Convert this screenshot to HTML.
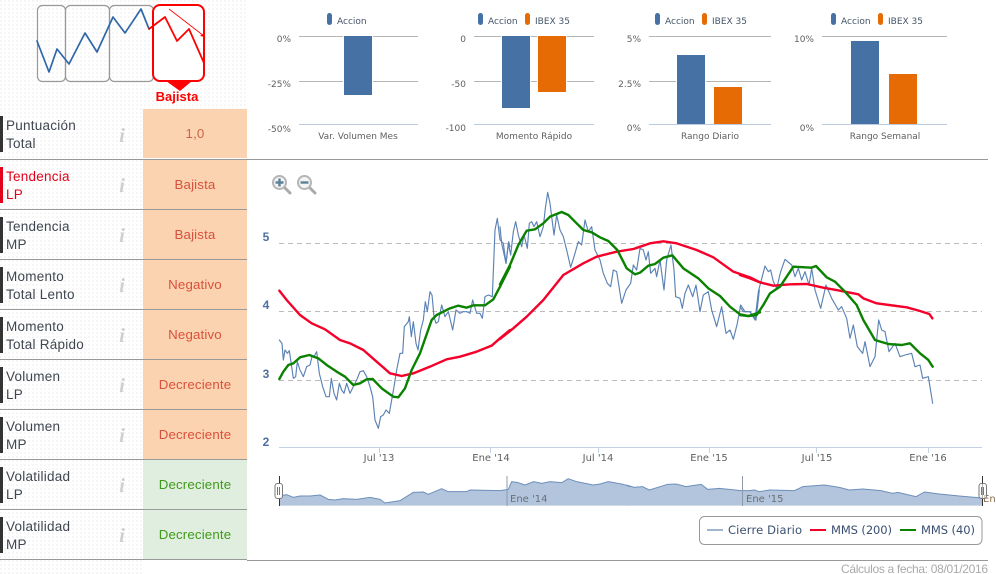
<!DOCTYPE html>
<html lang="es"><head><meta charset="utf-8"><title>Análisis</title>
<style>
html,body{margin:0;padding:0;background:#fff;width:996px;height:574px;overflow:hidden}
svg{display:block;font-family:"Liberation Sans",sans-serif}
.rl{font-size:13.5px;fill:#3f4650;letter-spacing:.25px}
.v{font-size:13.3px;text-anchor:middle;letter-spacing:.15px}
.o{fill:#d8513c}.g{fill:#3f9a1a}
.i{font-family:"Liberation Serif",serif;font-style:italic;font-weight:bold;font-size:20px;fill:#cfcfcf;text-anchor:middle}
.l{font-family:"DejaVu Sans",sans-serif;font-size:9px;fill:#445468}
.y{font-family:"DejaVu Sans",sans-serif;font-size:9px;fill:#5f5f5f;text-anchor:end}
.c{font-family:"DejaVu Sans",sans-serif;font-size:9px;fill:#5f5f5f;text-anchor:middle}
.x{font-family:"DejaVu Sans",sans-serif;font-size:10px;fill:#5f5f5f;text-anchor:middle;font-weight:normal}
.yb{font-size:12px;font-weight:bold;fill:#4d70a0;text-anchor:middle}
.t{fill:none;stroke-linejoin:round;stroke-linecap:round}
</style></head><body>
<svg width="996" height="574" viewBox="0 0 996 574" xmlns="http://www.w3.org/2000/svg">
<defs><pattern id="d" width="4" height="4" patternUnits="userSpaceOnUse"><rect x="0" y="0" width="2" height="2" fill="#f6f6f6"/></pattern></defs>
<rect width="996" height="574" fill="#fff"/>
<rect x="0" y="0" width="143" height="574" fill="url(#d)"/>
<rect x="143" y="0" width="104" height="109" fill="url(#d)"/>

<!-- top icon -->
<g fill="none" stroke="#999" stroke-width="1.2">
<rect x="37.5" y="5.5" width="28" height="76" rx="5"/>
<rect x="65.5" y="5.5" width="44" height="76" rx="5"/>
<rect x="109.5" y="5.5" width="44" height="76" rx="5"/>
</g>
<rect x="153" y="5" width="51" height="76" rx="7" fill="#fff" stroke="#f00" stroke-width="2"/>
<polyline class="t" stroke="#2f67a8" stroke-width="1.7" points="37,41 49,72 57,49 69,64 85,33 97,52 113,17 125,33 141,9 149,29"/>
<polyline class="t" stroke="#f00" stroke-width="1.8" points="149,29 165,17 177,41 189,29 204,63"/>
<path d="M169 9L204 36" stroke="#f00" stroke-width=".8" fill="none"/><path d="M200 36l5 1-1-4z" fill="#f00"/>
<path d="M166 81H192L180 91Z" fill="#f00"/>
<text x="177" y="101" font-size="13" font-weight="bold" fill="#f00" text-anchor="middle">Bajista</text>

<!-- left table -->
<rect x="143" y="109" width="104" height="49" fill="#fcd3b0"/>
<rect x="143" y="160" width="104" height="49" fill="#fcd3b0"/>
<rect x="143" y="210" width="104" height="49" fill="#fcd3b0"/>
<rect x="143" y="260" width="104" height="49" fill="#fcd3b0"/>
<rect x="143" y="310" width="104" height="49" fill="#fcd3b0"/>
<rect x="143" y="360" width="104" height="49" fill="#fcd3b0"/>
<rect x="143" y="410" width="104" height="49" fill="#fcd3b0"/>
<rect x="143" y="460" width="104" height="49" fill="#e0eedf"/>
<rect x="143" y="510" width="104" height="49" fill="#e0eedf"/>
<g fill="#999">
<rect x="0" y="159" width="247" height="1"/><rect x="0" y="209" width="247" height="1"/><rect x="0" y="259" width="247" height="1"/><rect x="0" y="309" width="247" height="1"/><rect x="0" y="359" width="247" height="1"/><rect x="0" y="409" width="247" height="1"/><rect x="0" y="459" width="247" height="1"/><rect x="0" y="509" width="247" height="1"/><rect x="0" y="559" width="247" height="1"/>
</g>
<g fill="#333">
<rect x="0" y="116" width="3" height="36"/><rect x="0" y="217" width="3" height="36"/><rect x="0" y="267" width="3" height="36"/><rect x="0" y="317" width="3" height="36"/><rect x="0" y="367" width="3" height="36"/><rect x="0" y="417" width="3" height="36"/><rect x="0" y="467" width="3" height="36"/><rect x="0" y="517" width="3" height="36"/>
</g>
<rect x="0" y="167" width="3" height="36" fill="#e2001a"/>
<text class="rl" x="6" y="130">Puntuación</text><text class="rl" x="6" y="148">Total</text>
<text class="rl" x="6" y="181" style="fill:#e2001a">Tendencia</text><text class="rl" x="6" y="199" style="fill:#e2001a">LP</text>
<text class="rl" x="6" y="231">Tendencia</text><text class="rl" x="6" y="249">MP</text>
<text class="rl" x="6" y="281">Momento</text><text class="rl" x="6" y="299">Total Lento</text>
<text class="rl" x="6" y="331">Momento</text><text class="rl" x="6" y="349">Total Rápido</text>
<text class="rl" x="6" y="381">Volumen</text><text class="rl" x="6" y="399">LP</text>
<text class="rl" x="6" y="431">Volumen</text><text class="rl" x="6" y="449">MP</text>
<text class="rl" x="6" y="481">Volatilidad</text><text class="rl" x="6" y="499">LP</text>
<text class="rl" x="6" y="531">Volatilidad</text><text class="rl" x="6" y="549">MP</text>
<g class="i">
<text class="i" x="122" y="142">i</text><text class="i" x="122" y="192">i</text><text class="i" x="122" y="242">i</text><text class="i" x="122" y="292">i</text><text class="i" x="122" y="342">i</text><text class="i" x="122" y="392">i</text><text class="i" x="122" y="442">i</text><text class="i" x="122" y="492">i</text><text class="i" x="122" y="542">i</text>
</g>
<text class="v" x="195" y="138" fill="#c9654a">1,0</text>
<text class="v o" x="195" y="189">Bajista</text>
<text class="v o" x="195" y="239">Bajista</text>
<text class="v o" x="195" y="289">Negativo</text>
<text class="v o" x="195" y="339">Negativo</text>
<text class="v o" x="195" y="389">Decreciente</text>
<text class="v o" x="195" y="439">Decreciente</text>
<text class="v g" x="195" y="489">Decreciente</text>
<text class="v g" x="195" y="539">Decreciente</text>

<!-- separators -->
<rect x="247" y="159" width="741" height="1" fill="#999"/>
<rect x="247" y="560" width="741" height="1" fill="#999"/>
<text x="988" y="573" font-size="12" fill="#aaa" text-anchor="end" textLength="147">Cálculos a fecha: 08/01/2016</text>

<!-- bar chart 1 -->
<g fill="#b5b5b5"><rect x="299" y="36" width="119" height="1"/><rect x="299" y="81" width="119" height="1"/></g>
<rect x="299" y="124" width="119" height="1" fill="#b8cbdf"/>
<rect x="343" y="35" width="30" height="61" fill="#fff"/><rect x="344" y="36" width="28" height="59" fill="#4571a5"/>
<rect x="327" y="13" width="5" height="12" rx="2.5" fill="#4571a5"/><text class="l" x="337" y="24">Accion</text>
<text class="y" x="291" y="42">0%</text><text class="y" x="291" y="87">-25%</text><text class="y" x="291" y="132">-50%</text>
<text class="c" x="358" y="139">Var. Volumen Mes</text>

<!-- bar chart 2 -->
<g fill="#b5b5b5"><rect x="474" y="36" width="120" height="1"/><rect x="474" y="81" width="120" height="1"/></g>
<rect x="474" y="124" width="120" height="1" fill="#b8cbdf"/>
<rect x="501" y="35" width="30" height="74" fill="#fff"/><rect x="537" y="35" width="30" height="58" fill="#fff"/>
<rect x="502" y="36" width="28" height="72" fill="#4571a5"/><rect x="538" y="36" width="28" height="56" fill="#e66b05"/>
<rect x="478" y="13" width="5" height="12" rx="2.5" fill="#4571a5"/><text class="l" x="488" y="24">Accion</text>
<rect x="525" y="13" width="5" height="12" rx="2.5" fill="#e66b05"/><text class="l" x="535" y="24">IBEX 35</text>
<text class="y" x="466" y="42">0</text><text class="y" x="466" y="87">-50</text><text class="y" x="466" y="131">-100</text>
<text class="c" x="534" y="139">Momento Rápido</text>

<!-- bar chart 3 -->
<g fill="#b5b5b5"><rect x="649" y="36" width="122" height="1"/><rect x="649" y="81" width="122" height="1"/></g>
<rect x="649" y="124" width="122" height="1" fill="#b8cbdf"/>
<rect x="676" y="54" width="30" height="70" fill="#fff"/><rect x="713" y="86" width="30" height="38" fill="#fff"/>
<rect x="677" y="55" width="28" height="69" fill="#4571a5"/><rect x="714" y="87" width="28" height="37" fill="#e66b05"/>
<rect x="655" y="13" width="5" height="12" rx="2.5" fill="#4571a5"/><text class="l" x="665" y="24">Accion</text>
<rect x="702" y="13" width="5" height="12" rx="2.5" fill="#e66b05"/><text class="l" x="712" y="24">IBEX 35</text>
<text class="y" x="641" y="42">5%</text><text class="y" x="641" y="87">2.5%</text><text class="y" x="641" y="131">0%</text>
<text class="c" x="710" y="139">Rango Diario</text>

<!-- bar chart 4 -->
<rect x="822" y="36" width="125" height="1" fill="#b5b5b5"/>
<rect x="822" y="124" width="125" height="1" fill="#b8cbdf"/>
<rect x="851" y="41" width="28" height="83" fill="#4571a5"/><rect x="889" y="74" width="28" height="50" fill="#e66b05"/>
<rect x="831" y="13" width="5" height="12" rx="2.5" fill="#4571a5"/><text class="l" x="841" y="24">Accion</text>
<rect x="878" y="13" width="5" height="12" rx="2.5" fill="#e66b05"/><text class="l" x="888" y="24">IBEX 35</text>
<text class="y" x="814" y="42">10%</text><text class="y" x="814" y="131">0%</text>
<text class="c" x="885" y="139">Rango Semanal</text>

<!-- zoom icons -->
<g fill="none">
<path d="M285 188l5 5" stroke="#aaa" stroke-width="3" stroke-linecap="round"/>
<circle cx="279.5" cy="182.5" r="6.5" stroke="#b5b5b5" stroke-width="2" fill="#f4f4f4"/>
<path d="M275.5 182.5h8M279.5 178.5v8" stroke="#5d8199" stroke-width="2.4"/>
<path d="M310 188l5 5" stroke="#aaa" stroke-width="3" stroke-linecap="round"/>
<circle cx="304.5" cy="182.5" r="6.5" stroke="#b5b5b5" stroke-width="2" fill="#f4f4f4"/>
<path d="M300.5 182.5h8" stroke="#5d8199" stroke-width="2.4"/>
</g>

<!-- main chart grid -->
<g stroke="#bbb" stroke-width="1" stroke-dasharray="5 4">
<path d="M279 243.5H982M279 311.5H982M279 380.5H982"/>
</g>
<rect x="279" y="447" width="703" height="1" fill="#c3d1e2"/>
<g fill="#c3d1e2"><rect x="379" y="447" width="1" height="6"/><rect x="490" y="447" width="1" height="6"/><rect x="598" y="447" width="1" height="6"/><rect x="709" y="447" width="1" height="6"/><rect x="816" y="447" width="1" height="6"/><rect x="928" y="447" width="1" height="6"/></g>
<text class="yb" x="266" y="241">5</text><text class="yb" x="266" y="309">4</text><text class="yb" x="266" y="378">3</text><text class="yb" x="266" y="446">2</text>
<text class="x" x="379" y="461">Jul '13</text><text class="x" x="491" y="461">Ene '14</text><text class="x" x="598" y="461">Jul '14</text><text class="x" x="709" y="461">Ene '15</text><text class="x" x="817" y="461">Jul '15</text><text class="x" x="928" y="461">Ene '16</text>

<!-- price -->
<g class="t" stroke="#5b82b5" fill="none">
<polyline vector-effect="non-scaling-stroke" stroke-width="1.15" transform="translate(250 180) scale(.33333)" points="88,480 96,490 100,540 105,510 112,520 118,512 125,560 130,595 137,590 142,545 150,570 160,590 170,560 180,555 186,530 192,530 200,515 208,580 218,620 228,650 238,650 244,595 252,640 260,660 268,610 275,630 282,640 290,610 300,640 310,620 320,600 330,575 340,572 350,590 360,620 368,650 375,720 385,745 392,710 400,705 408,690 418,700 425,660 432,620 440,570 450,520 458,520 463,440 475,425 478,410 484,470 490,425 498,490 504,510 512,450 520,420 526,365 532,395 540,335 546,345 552,410 558,430 565,425 575,375 585,410 595,395 608,450 618,390 630,400 640,395 650,395 660,400 668,360 680,400 690,400 697,415 705,350 715,345 727,350 735,150 742,115 750,180 760,190 768,250 776,185 780,200"/>
<polyline vector-effect="non-scaling-stroke" stroke-width="1.15" transform="translate(500 180) scale(.33333)" points="0,140 5,190 18,250 25,190 32,225 40,155 47,125 55,165 65,200 72,165 82,205 88,130 95,125 102,140 110,125 120,170 130,140 136,85 143,37 150,70 155,110 162,165 170,105 180,150 190,170 200,210 212,262 222,230 235,185 245,195 255,120 265,155 275,140 285,210 300,240 310,280 322,310 332,320 340,270 350,275 365,370 378,330 392,310 400,255 410,270 420,205 430,210 438,240 445,215 452,280 465,265 470,290 480,240 492,330 500,240 513,195 522,270 527,350 540,355 547,385 555,340 565,315 578,350 588,315 600,395 610,345 625,335 635,390 650,440 665,380 678,460 690,450 700,478 712,430 722,375 735,395 750,395 768,420 778,330"/>
<polyline vector-effect="non-scaling-stroke" stroke-width="1.15" transform="translate(740 240) scale(.33333)" points="0,200 10,215 30,215 45,240 55,155 75,78 85,95 92,90 100,125 110,145 122,95 135,58 155,75 165,110 175,85 185,120 195,95 207,135 215,85 225,150 242,205 258,135 275,175 295,210 305,200 320,235 330,295 340,255 352,320 368,340 375,305 390,380 405,350 416,240 425,270 435,275 447,335 465,310 480,350 495,345 515,340 525,380 540,375 548,415 565,410 578,490"/>
</g>
<!-- MMS 200 -->
<g class="t" stroke="#f5002a" fill="none">
<polyline vector-effect="non-scaling-stroke" stroke-width="2.4" transform="translate(250 180) scale(.33333)" points="88,332 110,360 150,405 185,430 225,448 270,480 300,490 340,510 380,545 420,580 455,588 490,580 540,560 590,538 630,530 680,515 725,497 750,475 780,450"/>
<polyline vector-effect="non-scaling-stroke" stroke-width="2.4" transform="translate(500 180) scale(.33333)" points="0,477 40,445 80,410 130,360 190,285 250,250 290,230 350,215 400,207 450,190 490,184 530,190 590,210 640,232 700,275 750,292 780,307"/>
<polyline vector-effect="non-scaling-stroke" stroke-width="2.4" transform="translate(740 240) scale(.33333)" points="0,105 30,115 60,127 100,137 150,133 200,132 250,143 300,152 355,163 370,175 410,190 500,202 540,213 568,222 577,235"/>
</g>
<!-- MMS 40 -->
<g class="t" stroke="#0a8200" fill="none">
<polyline vector-effect="non-scaling-stroke" stroke-width="2.4" transform="translate(250 180) scale(.33333)" points="88,597 100,575 115,555 130,550 150,532 178,525 205,535 230,555 260,575 285,590 310,615 330,610 350,598 368,597 395,625 430,650 445,652 465,625 485,570 510,520 545,420 560,405 600,385 625,377 650,383 670,376 705,376 730,358 750,320 780,260"/>
<polyline vector-effect="non-scaling-stroke" stroke-width="2.4" transform="translate(500 180) scale(.33333)" points="0,313 30,255 55,195 80,152 105,148 130,130 150,110 185,96 205,105 225,125 250,150 275,157 300,172 325,183 352,210 380,265 405,283 420,278 445,257 465,252 490,233 517,226 550,265 595,295 625,325 660,348 690,380 720,403 745,408 780,397"/>
<polyline vector-effect="non-scaling-stroke" stroke-width="2.4" transform="translate(740 240) scale(.33333)" points="0,225 25,228 50,225 70,195 90,160 120,140 160,80 215,83 228,78 260,112 285,125 315,155 350,195 370,240 405,300 445,312 485,315 510,310 540,340 565,360 578,380"/>
</g>

<!-- navigator -->
<polygon fill="#b3c5dc" transform="translate(260 460) scale(.33333)" points="58,137 58,108 80,104 100,112 120,108 150,108 180,105 205,118 225,120 250,116 290,118 330,112 360,118 375,129 420,122 460,97 490,96 505,103 545,86 565,95 620,95 630,90 720,92 745,88 755,65 775,68 795,75 820,65 845,70 870,65 905,68 925,56 950,65 1000,75 1020,72 1045,65 1090,73 1110,80 1110,137"/>
<polygon fill="#b3c5dc" transform="translate(626 460) scale(.33333)" points="0,137 0,75 25,82 50,80 70,90 125,73 150,72 180,80 225,73 245,88 280,85 345,92 370,92 385,90 400,95 430,90 505,92 530,80 595,75 640,82 670,90 710,87 765,92 800,100 815,97 870,110 895,96 940,102 1000,108 1068,114 1068,137"/>
<polyline class="t" vector-effect="non-scaling-stroke" stroke="#6d8fbb" stroke-width="1" transform="translate(260 460) scale(.33333)" points="58,108 80,104 100,112 120,108 150,108 180,105 205,118 225,120 250,116 290,118 330,112 360,118 375,129 420,122 460,97 490,96 505,103 545,86 565,95 620,95 630,90 720,92 745,88 755,65 775,68 795,75 820,65 845,70 870,65 905,68 925,56 950,65 1000,75 1020,72 1045,65 1090,73 1110,80"/>
<polyline class="t" vector-effect="non-scaling-stroke" stroke="#6d8fbb" stroke-width="1" transform="translate(626 460) scale(.33333)" points="0,75 25,82 50,80 70,90 125,73 150,72 180,80 225,73 245,88 280,85 345,92 370,92 385,90 400,95 430,90 505,92 530,80 595,75 640,82 670,90 710,87 765,92 800,100 815,97 870,110 895,96 940,102 1000,108 1068,114"/>
<rect x="506.5" y="476" width="1" height="30" fill="#8e9aa8"/><rect x="742" y="476" width="1" height="30" fill="#8e9aa8"/>
<text x="510" y="502" class="x" style="text-anchor:start;fill:#6b6f76">Ene '14</text>
<text x="746" y="502" class="x" style="text-anchor:start;fill:#6b6f76">Ene '15</text>
<text x="983" y="502" class="x" style="text-anchor:start;fill:#8a6d4a">En</text>
<g>
<rect x="279" y="476" width="1" height="30" fill="#333"/>
<rect x="275" y="483.5" width="7.5" height="15" rx="2.5" fill="#fff" stroke="#777"/>
<path d="M277.5 487v8M279.5 487v8" stroke="#777" stroke-width="1"/>
<rect x="982" y="476" width="1" height="30" fill="#333"/>
<rect x="979" y="483.5" width="7.5" height="15" rx="2.5" fill="#fff" fill-opacity=".6" stroke="#777"/>
<path d="M981.5 487v8M983.5 487v8" stroke="#777" stroke-width="1"/>
</g>

<!-- legend -->
<rect x="699.5" y="516.5" width="282.5" height="28" rx="5" fill="#fff" stroke="#999"/>
<rect x="707" y="529" width="16" height="2" fill="#a1b5cf"/>
<text x="728" y="534" font-family="DejaVu Sans, sans-serif" font-size="11.5" fill="#3a4f70" textLength="74">Cierre Diario</text>
<rect x="810" y="529" width="16" height="2" fill="#f5002a"/>
<text x="831" y="534" font-family="DejaVu Sans, sans-serif" font-size="11.5" fill="#3a4f70" textLength="61">MMS (200)</text>
<rect x="900" y="529" width="16" height="2" fill="#0a8200"/>
<text x="921" y="534" font-family="DejaVu Sans, sans-serif" font-size="11.5" fill="#3a4f70" textLength="54">MMS (40)</text>
</svg>
</body></html>
